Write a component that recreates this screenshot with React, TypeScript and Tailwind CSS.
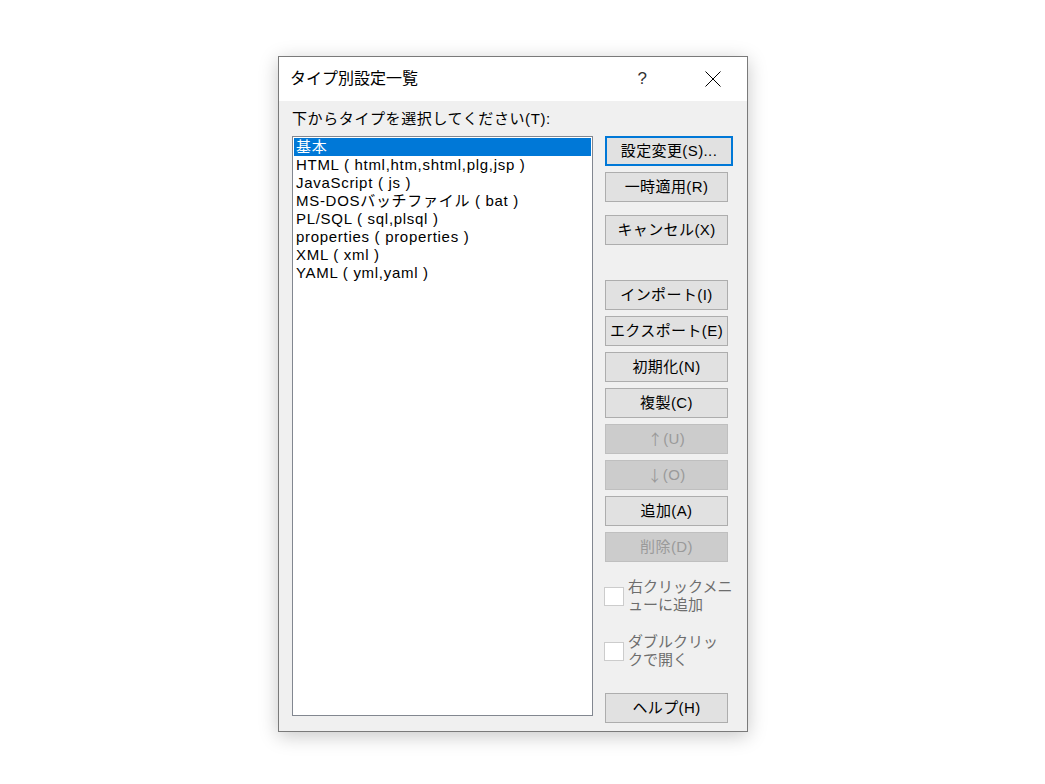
const fileTypes = [
  "基本",
  "HTML ( html,htm,shtml,plg,jsp )",
  "JavaScript ( js )",
  "MS-DOSバッチファイル ( bat )",
  "PL/SQL ( sql,plsql )",
  "properties ( properties )",
  "XML ( xml )",
  "YAML ( yml,yaml )",
];

function Button({
  label,
  className = "",
  disabled = false,
  focused = false,
  arrow,
}: {
  label: string;
  className?: string;
  disabled?: boolean;
  focused?: boolean;
  arrow?: string;
}) {
  let look = "w-[123px] border border-[#adadad] bg-[#e1e1e1] text-black";
  if (focused) look = "w-[128px] border-2 border-[#0078d7] bg-[#e1e1e1] text-black";
  if (disabled) look = "w-[123px] border border-[#bfbfbf] bg-[#cccccc] text-[#9a9a9a]";
  return (
    <div
      className={`h-[30px] flex items-center justify-center text-[15px] leading-[18px] tracking-[0.4px] ${look} ${className}`}
    >
      {arrow && <span style={{ fontFamily: '"Noto Sans CJK JP", sans-serif' }}>{arrow}</span>}
      {label}
    </div>
  );
}

function Checkbox({ lines, className = "" }: { lines: string[]; className?: string }) {
  return (
    <div className={`flex items-center ${className}`}>
      <div className="w-[20px] h-[19px] border border-[#cccccc] bg-white shrink-0" />
      <div className="ml-[4px] text-[15px] leading-[18px] text-[#6d6d6d]">
        {lines.map((l) => (
          <div key={l}>{l}</div>
        ))}
      </div>
    </div>
  );
}

export default function App() {
  return (
    <div
      className="w-full min-h-[784px] bg-white pt-[56px] pl-[278px]"
      style={{ fontFamily: '"Liberation Sans", "Noto Sans CJK JP", sans-serif' }}
    >
      <div className="w-[470px] h-[676px] border border-[#7a7a7a] bg-[#f0f0f0] flex flex-col shadow-[0_4px_18px_rgba(0,0,0,0.22)]">
        {/* title bar */}
        <div className="h-[44px] bg-white flex items-center pl-[11px] shrink-0">
          <span className="text-[16px] text-black">タイプ別設定一覧</span>
          <span className="ml-auto text-[17px] text-[#333] mr-[58px]">?</span>
          <svg width="16" height="16" viewBox="0 0 16 16" className="mr-[26px]">
            <path d="M0.5 0.5L15.5 15.5M15.5 0.5L0.5 15.5" stroke="#000" strokeWidth="1" />
          </svg>
        </div>

        {/* body */}
        <div className="px-[13px] pt-[9px]">
          <div className="text-[15px] leading-[18px] text-black tracking-[0.6px]">
            下からタイプを選択してください(T):
          </div>
          <div className="flex items-start mt-[8px]">
            <div className="w-[301px] h-[580px] border border-[#828790] bg-white p-[1px]">
              {fileTypes.map((t, i) => (
                <div
                  key={t}
                  className={`h-[18px] leading-[18px] pl-[2px] text-[15px] tracking-[0.7px] whitespace-nowrap ${
                    i === 0 ? "bg-[#0078d7] text-white" : "text-black"
                  }`}
                >
                  {t}
                </div>
              ))}
            </div>

            <div className="ml-[12px] flex flex-col">
              <Button label="設定変更(S)..." focused />
              <Button label="一時適用(R)" className="mt-[6px]" />
              <Button label="キャンセル(X)" className="mt-[13px]" />
              <Button label="インポート(I)" className="mt-[35px]" />
              <Button label="エクスポート(E)" className="mt-[6px]" />
              <Button label="初期化(N)" className="mt-[6px]" />
              <Button label="複製(C)" className="mt-[6px]" />
              <Button arrow="↑" label="(U)" className="mt-[6px]" disabled />
              <Button arrow="↓" label="(O)" className="mt-[6px]" disabled />
              <Button label="追加(A)" className="mt-[6px]" />
              <Button label="削除(D)" className="mt-[6px]" disabled />
              <Checkbox lines={["右クリックメニ", "ューに追加"]} className="mt-[16px] -ml-[1px]" />
              <Checkbox lines={["ダブルクリッ", "クで開く"]} className="mt-[19px] -ml-[1px]" />
              <Button label="ヘルプ(H)" className="mt-[24px]" />
            </div>
          </div>
        </div>
      </div>
    </div>
  );
}
